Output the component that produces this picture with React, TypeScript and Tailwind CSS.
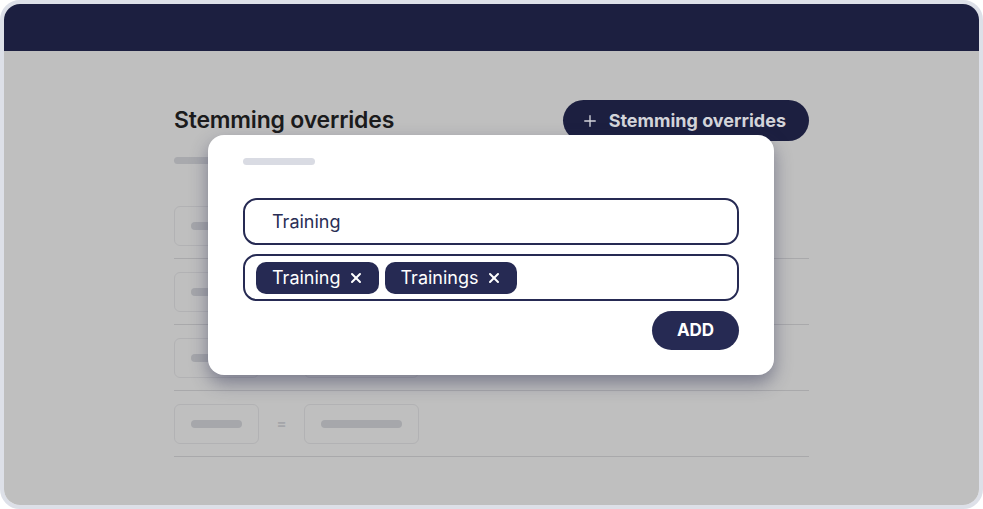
import { Plus, X } from "lucide-react";

const rows = [0, 1, 2, 3];

function OverrideRow() {
	return (
		<div className="flex items-center border-b border-[#a9a9ab] pt-[13px] pb-[12px]">
			<div className="flex h-[40px] w-[85px] items-center rounded-[6px] border border-[#b2b2b4] px-[16px]">
				<div className="h-[8px] w-full rounded-full bg-[#a6a7ab]" />
			</div>
			<span className="w-[45px] text-center text-[15px] font-semibold text-[#a4a5a9]">=</span>
			<div className="flex h-[40px] w-[115px] items-center rounded-[6px] border border-[#b2b2b4] px-[16px]">
				<div className="h-[8px] w-full rounded-full bg-[#a6a7ab]" />
			</div>
		</div>
	);
}

function Chip({ label }: { label: string }) {
	return (
		<span className="flex h-[32px] items-center gap-[7px] rounded-[10px] bg-[#262a53] pl-[16px] pr-[15px] text-[18px] text-white">
			{label}
			<X size={16} strokeWidth={3} />
		</span>
	);
}

export default function App() {
	return (
		<div
			className="h-[509px] w-[983px] bg-white"
			style={{ fontFamily: "Inter, 'Noto Sans', sans-serif" }}
		>
			<div className="relative flex h-full flex-col overflow-hidden rounded-[20px] border-4 border-[#dde0e8]">
				<div className="h-[47px] shrink-0 bg-[#1c1f40]" />
				<div className="flex-1 bg-[#bfbfbf] pl-[170px] pt-[49px]">
					<div className="w-[635px]">
						<div className="flex items-center justify-between">
							<h1 className="text-[23px] font-semibold tracking-[-0.2px] text-[#1b1b1c]">
								Stemming overrides
							</h1>
							<button className="flex h-[41px] items-center gap-[10px] rounded-full bg-[#1c1f40] pl-[18px] pr-[23px] text-[18px] font-bold text-[#d3d4da]">
								<Plus size={18} strokeWidth={1.8} />
								Stemming overrides
							</button>
						</div>
						<div className="mt-[16px] h-[7px] w-[100px] rounded-full bg-[#a8a9ad]" />
						<div className="mt-[29px]">
							{rows.map((r) => (
								<OverrideRow key={r} />
							))}
						</div>
					</div>
				</div>

				<div className="absolute left-[204px] top-[131px] w-[566px] rounded-[16px] bg-white px-[35px] pt-[23px] pb-[25px] shadow-[0_8px_18px_rgba(40,42,80,0.45)]">
					<div className="h-[7px] w-[72px] rounded-full bg-[#d9dbe3]" />
					<div className="mt-[33px] flex h-[47px] items-center rounded-[14px] border-2 border-[#262a53] pl-[27px] text-[18px] text-[#2a2e55]">
						Training
					</div>
					<div className="mt-[9px] flex h-[47px] items-center gap-[6px] rounded-[14px] border-2 border-[#262a53] pl-[11px]">
						<Chip label="Training" />
						<Chip label="Trainings" />
					</div>
					<div className="mt-[10px] flex justify-end">
						<button className="h-[39px] w-[87px] rounded-full bg-[#262a53] text-[17px] font-bold text-white">
							ADD
						</button>
					</div>
				</div>
			</div>
		</div>
	);
}
